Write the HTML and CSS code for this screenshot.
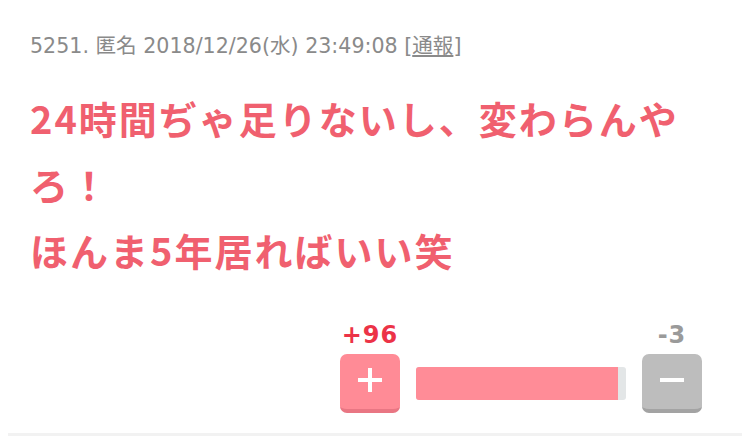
FILE: index.html
```html
<!DOCTYPE html>
<html lang="ja">
<head>
    <meta charset="UTF-8">
    <meta name="viewport" content="width=device-width, initial-scale=1.0">
    <title>5251</title>
    <link rel="stylesheet" href="styles.css">
</head>
<body>

    <div class="comment">
        <div class="meta">5251. 匿名 2018/12/26(水) 23:49:08 [<a href="#">通報</a>]</div>

        <div class="body">24時間ぢゃ足りないし、変わらんやろ！<br>ほんま5年居ればいい笑</div>

        <div class="vote">
            <span class="count plus">+96</span>
            <span></span>
            <span class="count minus">-3</span>

            <button class="btn btn-plus" aria-label="plus">
                <svg width="28" height="28" viewBox="0 0 28 28"><path d="M14 2v24M2 14h24" stroke="#fff" stroke-width="4"/></svg>
            </button>
            <div class="bar"><div class="fill" style="width: 96%;"></div></div>
            <button class="btn btn-minus" aria-label="minus">
                <svg width="28" height="28" viewBox="0 0 28 28"><path d="M2 14h24" stroke="#fff" stroke-width="4"/></svg>
            </button>
        </div>
    </div>

</body>
</html>
```

FILE: styles.css
```css
body {
    margin: 8px;
    background: #fff;
    font-family: "DejaVu Sans", "Noto Sans CJK JP", sans-serif;
}
.comment {
    padding: 26px 22px 20px;
    border-bottom: 3px solid #f2f2f2;
}
.meta {
    font-size: 20.6px;
    color: #8a8a8a;
    line-height: 24px;
}
.meta a {
    color: #8a8a8a;
}
.body {
    margin-top: 27px;
    font-family: "Noto Sans CJK JP", sans-serif;
    font-weight: bold;
    font-size: 38px;
    letter-spacing: 2px;
    line-height: 66px;
    color: #f0606f;
}
.vote {
    width: 362px;
    margin: 39px 18px 0 auto;
    display: grid;
    grid-template-columns: 60px 1fr 60px;
    column-gap: 16px;
    row-gap: 6px;
    align-items: center;
}
.count {
    text-align: center;
    font-weight: bold;
    font-size: 24px;
    letter-spacing: 1px;
    line-height: 26px;
}
.plus {
    color: #ec3347;
}
.minus {
    color: #9a9a9a;
}
.btn {
    width: 60px;
    height: 59px;
    border: none;
    border-radius: 7px;
    padding: 0 0 4px;
    display: flex;
    align-items: center;
    justify-content: center;
    cursor: pointer;
}
.btn-plus {
    background: #ff8b96;
    border-bottom: 4px solid #e97683;
}
.btn-minus {
    background: #bdbdbd;
    border-bottom: 4px solid #a3a3a3;
}
.bar {
    height: 33px;
    background: #e3e6e7;
    border-radius: 3px;
    overflow: hidden;
}
.fill {
    height: 100%;
    background: #ff8c97;
}
```
